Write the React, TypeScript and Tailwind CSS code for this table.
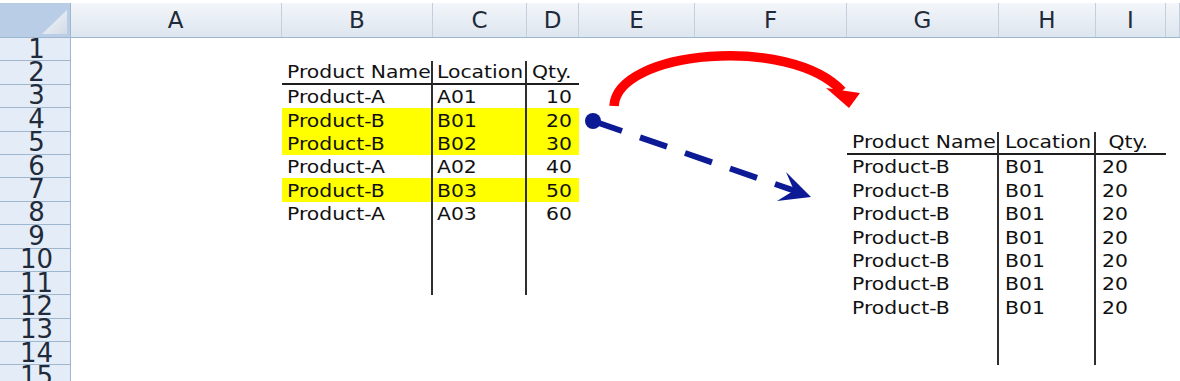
import React from "react";

const LETTERS = ["A", "B", "C", "D", "E", "F", "G", "H", "I", ""];
const ROWS = Array.from({ length: 15 }, (_, i) => i + 1);
const GRID = "grid grid-cols-[212px_151px_94px_52px_116px_152px_152px_97px_70px_1fr]";

const leftData: Record<number, [string, string, string]> = {
  3: ["Product-A", "A01", "10"],
  4: ["Product-B", "B01", "20"],
  5: ["Product-B", "B02", "30"],
  6: ["Product-A", "A02", "40"],
  7: ["Product-B", "B03", "50"],
  8: ["Product-A", "A03", "60"],
};

type Cell = { text: string; cls: string; right?: boolean };

function cellFor(r: number, c: number): Cell {
  let cls = "flex items-end h-full min-w-0";
  let text = "";
  let right = false;
  // left table: cols 1..3, rows 2..11
  if (c >= 1 && c <= 3 && r >= 2 && r <= 11) {
    if (r === 4 || r === 5 || r === 7) cls += " bg-[#ffff00]";
    if (c === 1 || c === 2) cls += " border-r-2 border-r-[#2e2e2e]";
    if (r === 2) cls += " border-b-2 border-b-[#1e1e1e]";
    if (r === 2) {
      text = ["Product Name", "Location", "Qty."][c - 1];
      cls += c === 2 ? " pl-[4px]" : " pl-[5px]";
    } else if (leftData[r]) {
      text = leftData[r][c - 1];
      if (c === 3) {
        right = true;
        cls += " justify-end pr-[7px]";
      } else {
        cls += c === 2 ? " pl-[4px]" : " pl-[5px]";
      }
    }
  }
  // right table: cols 6..8, rows 5..14
  if (c >= 6 && c <= 8 && r >= 5 && r <= 14) {
    if (c === 6 || c === 7) cls += " border-r-2 border-r-[#2e2e2e]";
    if (r === 5) cls += " border-b-2 border-b-[#1e1e1e]";
    cls += c === 6 ? " pl-[5px]" : " pl-[6px]";
    if (r === 5) {
      text = ["Product Name", "Location", " Qty."][c - 6];
    } else if (r >= 6 && r <= 12) {
      text = ["Product-B", "B01", "20"][c - 6];
    }
  }
  return { text, cls, right };
}

export default function App() {
  return (
    <div className="relative w-[1180px] h-[381px] overflow-hidden bg-white font-['DejaVu_Sans',sans-serif] text-[#111]">
      <div className="h-[3px] bg-white" />
      {/* column header */}
      <div className="flex h-[35px] border-b border-[#9eb6ce] bg-gradient-to-b from-[#f3f6fa] to-[#dde5ef]">
        <div className="relative w-[71px] shrink-0 border-r border-[#9eb6ce] bg-[#b9cde7]">
          <svg className="absolute left-0 top-0" width="71" height="34" viewBox="0 0 71 34">
            <defs>
              <linearGradient id="tri" x1="0" y1="0" x2="1" y2="1">
                <stop offset="0" stopColor="#f6f8fb" />
                <stop offset="1" stopColor="#d2dbe6" />
              </linearGradient>
            </defs>
            <polygon points="42,31 67,31 67,7" fill="url(#tri)" />
          </svg>
        </div>
        <div className={GRID + " flex-1 -ml-px"}>
          {LETTERS.map((l, i) => (
            <div
              key={i}
              className="flex items-center justify-center border-r border-[#c3cfdd] text-[23px] leading-[30px] text-[#1f2b3a]"
            >
              {l}
            </div>
          ))}
        </div>
      </div>
      {/* body */}
      <div className="flex">
        <div className="w-[71px] shrink-0 border-r border-[#9eb6ce] bg-[#e4ecf7]">
          {ROWS.map((r) => (
            <div
              key={r}
              className="flex h-[23.4px] items-center justify-center overflow-visible border-b border-[#9eb6ce] pl-[3px] text-[26px] leading-[21px] text-[#1f2b3a]"
            >
              <span className="leading-[21px]">{r}</span>
            </div>
          ))}
        </div>
        <div className={GRID + " flex-1 -ml-px auto-rows-[23.4px]"}>
          {ROWS.map((r) =>
            LETTERS.map((_, c) => {
              const cell = cellFor(r, c);
              return (
                <div key={r + "-" + c} className={cell.cls}>
                  {cell.text ? (
                    <span
                      className={
                        "inline-block whitespace-pre text-[18px] leading-[21px] pb-[1px] scale-x-[1.13] " +
                        (cell.right ? "origin-right" : "origin-left")
                      }
                    >
                      {cell.text}
                    </span>
                  ) : null}
                </div>
              );
            })
          )}
        </div>
      </div>
      {/* arrows overlay */}
      <svg
        className="pointer-events-none absolute left-0 top-0"
        width="1180"
        height="381"
        viewBox="0 0 1180 381"
      >
        <path d="M 614 106 C 617 50, 790 35, 842 91" fill="none" stroke="#ff0000" strokeWidth="9.5" />
        <polygon points="826,88 860,93 849,108" fill="#ff0000" />
        <circle cx="593" cy="121" r="8" fill="#0c1a96" />
        <line x1="593" y1="121" x2="622" y2="131" stroke="#0c1a96" strokeWidth="6" />
        <line x1="640" y1="137.3" x2="667" y2="146.7" stroke="#0c1a96" strokeWidth="6" />
        <line x1="685" y1="153" x2="712" y2="162.3" stroke="#0c1a96" strokeWidth="6" />
        <line x1="730" y1="168.5" x2="757" y2="177.9" stroke="#0c1a96" strokeWidth="6" />
        <line x1="775" y1="184" x2="800" y2="192.7" stroke="#0c1a96" strokeWidth="6" />
        <polygon points="811,197 786,172 794,190.5 777,201" fill="#0c1a96" />
      </svg>
    </div>
  );
}
